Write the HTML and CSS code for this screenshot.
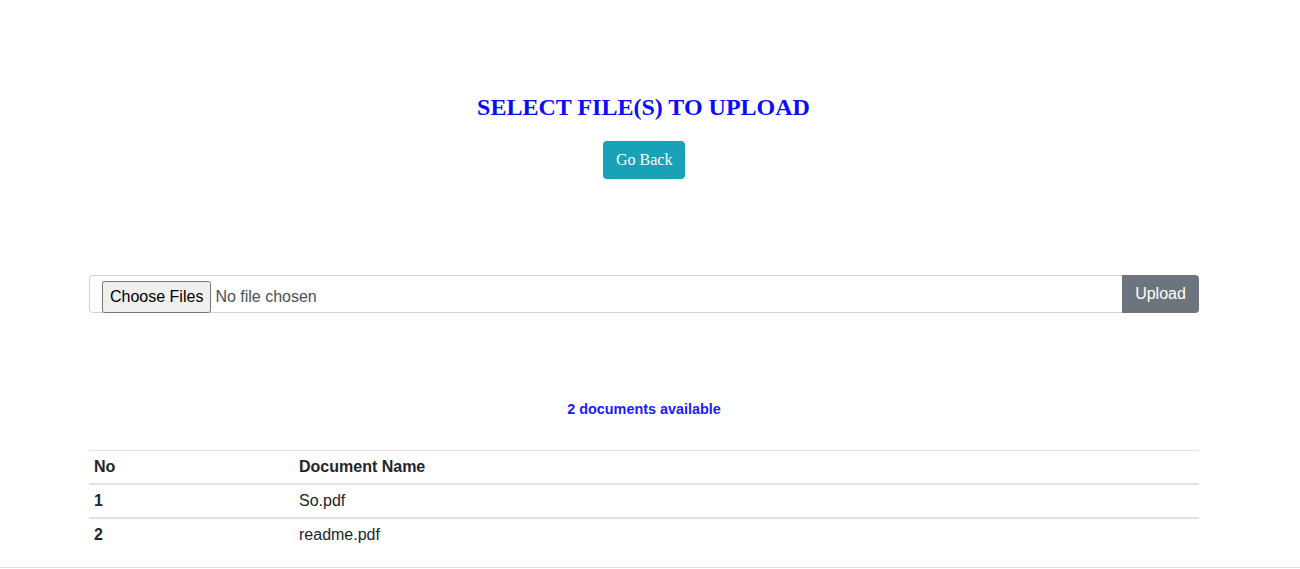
FILE: index.html
```html
<!DOCTYPE html>
<html>
<head>
<meta charset="utf-8">
<link rel="stylesheet" href="styles.css">
</head>
<body>
<div class="page">
  <header class="head">
    <h2 class="title">SELECT FILE(S) TO UPLOAD</h2>
    <a class="btn-back" href="#">Go Back</a>
  </header>
  <form class="upload">
    <div class="file-box">
      <input class="file-input" type="file" multiple>
    </div>
    <button class="btn-upload" type="button">Upload</button>
  </form>
  <p class="count">2 documents available</p>
  <table class="docs">
    <thead>
      <tr><th class="col-no">No</th><th>Document Name</th></tr>
    </thead>
    <tbody>
      <tr><th class="col-no">1</th><td>So.pdf</td></tr>
      <tr><th class="col-no">2</th><td>readme.pdf</td></tr>
    </tbody>
  </table>
</div>
<div class="bottom-rule"></div>
</body>
</html>
```

FILE: styles.css
```css
html, body {
  margin: 0;
  padding: 0;
  background: #fff;
}
body {
  font-family: "Liberation Serif", serif;
  color: #212529;
}
.page {
  width: 1110px;
  margin-left: 89px;
}
.head {
  display: flex;
  flex-direction: column;
  align-items: center;
  padding-top: 93px;
}
.title {
  margin: 0 0 0 -1px;
  font-family: "Liberation Serif", serif;
  font-weight: bold;
  font-size: 24px;
  line-height: 28px;
  color: #0a0aff;
}
.btn-back {
  margin-top: 20px;
  display: inline-block;
  background: #17a2b8;
  color: #fff;
  text-decoration: none;
  font-family: "Liberation Serif", serif;
  font-size: 16px;
  line-height: 24px;
  padding: 7px 13px 7px 13.5px;
  border-radius: 4px;
}
.upload {
  display: flex;
  margin-top: 96px;
  height: 38px;
}
.file-box {
  flex: 1;
  border: 1px solid #ced4da;
  border-right: none;
  border-radius: 4px 0 0 4px;
  display: flex;
  align-items: flex-start;
  padding: 5px 0 0 12px;
  box-sizing: border-box;
  overflow: visible;
  height: 38px;
}
.file-input {
  font-family: "Liberation Sans", sans-serif;
  font-size: 16px;
  line-height: 19px;
  color: #495057;
  margin: 0;
  padding: 0;
}
.file-input::file-selector-button {
  font-family: "Liberation Sans", sans-serif;
  font-size: 16px;
  padding: 5px 6px;
  margin-right: 4px;
}
.btn-upload {
  width: 77px;
  background: #6c757d;
  color: #fff;
  border: none;
  border-radius: 0 4px 4px 0;
  font-family: "Liberation Sans", sans-serif;
  font-size: 16px;
  padding: 0 0 1px;
  height: 38px;
  margin: 0;
}
.count {
  text-align: center;
  font-family: "Liberation Sans", sans-serif;
  font-weight: bold;
  font-size: 14.4px;
  color: #1a1aff;
  margin: 88px 0 0;
  line-height: 16px;
}
.docs {
  width: 100%;
  margin-top: 33px;
  border-collapse: collapse;
  font-family: "Liberation Sans", sans-serif;
  font-size: 16px;
  color: #212529;
}
.docs th, .docs td {
  text-align: left;
  padding: 4px 5px;
  line-height: 24px;
  border-top: 1px solid #dee2e6;
}
.docs thead th {
  border-bottom: 2px solid #dee2e6;
}
.docs tbody tr:first-child th, .docs tbody tr:first-child td {
  border-top: none;
}
.docs tbody tr + tr th, .docs tbody tr + tr td {
  border-top: 2px solid #dee2e6;
}
.col-no {
  width: 195px;
}
.bottom-rule {
  margin-top: 16px;
  border-top: 1px solid #dee2e6;
}
```
